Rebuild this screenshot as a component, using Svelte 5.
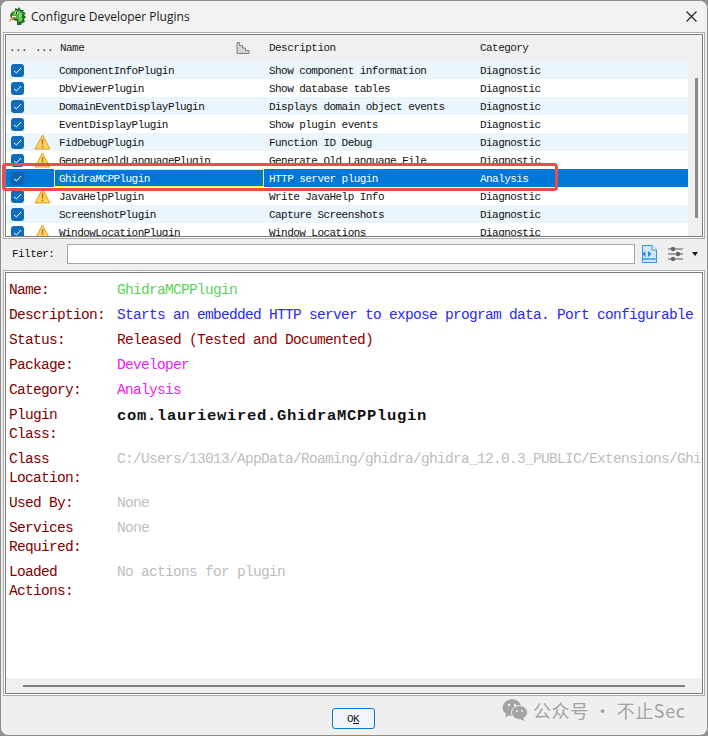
<script>
  const plugins = [
    { name: "ComponentInfoPlugin", desc: "Show component information", cat: "Diagnostic" },
    { name: "DbViewerPlugin", desc: "Show database tables", cat: "Diagnostic" },
    { name: "DomainEventDisplayPlugin", desc: "Displays domain object events", cat: "Diagnostic" },
    { name: "EventDisplayPlugin", desc: "Show plugin events", cat: "Diagnostic" },
    { name: "FidDebugPlugin", desc: "Function ID Debug", cat: "Diagnostic", warn: true },
    { name: "GenerateOldLanguagePlugin", desc: "Generate Old Language File", cat: "Diagnostic", warn: true },
    { name: "GhidraMCPPlugin", desc: "HTTP server plugin", cat: "Analysis", selected: true },
    { name: "JavaHelpPlugin", desc: "Write JavaHelp Info", cat: "Diagnostic", warn: true },
    { name: "ScreenshotPlugin", desc: "Capture Screenshots", cat: "Diagnostic" },
    { name: "WindowLocationPlugin", desc: "Window Locations", cat: "Diagnostic", warn: true },
  ];

  const details = [
    { label: ["Name:"], value: "GhidraMCPPlugin", kind: "green" },
    { label: ["Description:"], value: "Starts an embedded HTTP server to expose program data. Port configurable through Tool Options.", kind: "blue" },
    { label: ["Status:"], value: "Released (Tested and Documented)", kind: "red" },
    { label: ["Package:"], value: "Developer", kind: "pink" },
    { label: ["Category:"], value: "Analysis", kind: "pink" },
    { label: ["Plugin", "Class:"], value: "com.lauriewired.GhidraMCPPlugin", kind: "cls" },
    { label: ["Class", "Location:"], value: "C:/Users/13013/AppData/Roaming/ghidra/ghidra_12.0.3_PUBLIC/Extensions/GhidraMCP/lib/GhidraMCP.jar", kind: "gray" },
    { label: ["Used By:"], value: "None", kind: "gray" },
    { label: ["Services", "Required:"], value: "None", kind: "gray" },
    { label: ["Loaded", "Actions:"], value: "No actions for plugin", kind: "gray" },
  ];
</script>

<div class="window">
  <div class="titlebar">
    <svg class="dragon" width="18" height="19" viewBox="0 0 18 19">
      <path d="M6 1 L9 2 L10 0 L12 3 L15 3 L14 5 L17 6 L15 8 L17 10 L15 12 L16 15 L13 16 L12 18 L8 18 L8 14 L4 13 L2 11 L1 8 L3 5 L6 4 Z" fill="#1e6b1e" />
      <path d="M6 3 L11 4 L14 6 L13 9 L14 12 L12 15 L9 15 L9 12 L5 11 L3 9 L4 6 Z" fill="#4cb648" />
      <path d="M10 5 L13 7 L12 10 L13 13 L11 14 L10 10 Z" fill="#86d070" />
      <rect x="6" y="5" width="3" height="2" fill="#f4e04a" />
      <rect x="7" y="5" width="1" height="2" fill="#111" />
      <path d="M3 10 L6 11 L5 12 L3 12 L1 15 L0 14 L1 12 Z" fill="#f0883a" />
      <rect x="3" y="9" width="4" height="1" fill="#fff" />
    </svg>
    <span class="title">Configure Developer Plugins</span>
    <svg class="close" width="11" height="11" viewBox="0 0 11 11">
      <path d="M0.5 0.5 L10.5 10.5 M10.5 0.5 L0.5 10.5" stroke="#222" stroke-width="1.1" fill="none" />
    </svg>
  </div>

  <div class="panel table-panel">
    <div class="panel-inner table-inner">
      <div class="header">
        <span class="h-dots">...</span>
        <span class="h-dots">...</span>
        <span class="col-name h-name">
          Name
          <svg width="14" height="12" viewBox="0 0 14 12">
            <path d="M1 0.5 H3.5 V3.5 H6.5 V6 H9.5 V8.5 H13 V11.5 H1 Z" fill="#d4d4d4" stroke="#808080" />
          </svg>
        </span>
        <span class="col-desc">Description</span>
        <span class="col-cat">Category</span>
      </div>
      <div class="body">
        <div class="rows">
          {#each plugins as p, i}
            <div class="row" class:alt={i % 2 === 0} class:selected={p.selected}>
              <span class="check">
                <svg width="9" height="7" viewBox="0 0 9 7">
                  <path d="M1 3.8 L3.4 6 L8 1" stroke="#fff" stroke-width="1" fill="none" />
                </svg>
              </span>
              <span class="warn-cell">
                {#if p.warn}
                  <svg width="17" height="16" viewBox="0 0 17 16">
                    <path d="M8.5 1 L16 15 H1 Z" fill="#fbd75b" stroke="#e09a2a" stroke-linejoin="round" />
                    <path d="M8.5 5 V10.5 M8.5 11.8 V13.5" stroke="#c9781a" stroke-width="1.6" fill="none" />
                  </svg>
                {/if}
              </span>
              <span class="col-name" class:focus={p.selected}>{p.name}</span>
              <span class="col-desc">{p.desc}</span>
              <span class="col-cat">{p.cat}</span>
            </div>
          {/each}
        </div>
        <div class="vscroll"><div class="vthumb"></div></div>
      </div>
    </div>
  </div>

  <div class="filter">
    <span class="filter-label">Filter:</span>
    <div class="filter-input"></div>
    <svg width="16" height="18" viewBox="0 0 16 18">
      <path d="M1.5 0.5 H11 L15.5 5 V17.5 H1.5 Z" fill="#cfe6fa" stroke="#3d93dc" />
      <path d="M11 0.5 V5 H15.5" fill="#fff" stroke="#3d93dc" />
      <rect x="2" y="13" width="13" height="2" fill="#5aaeea" />
      <path d="M4.5 6 L1 9 L4.5 12 Z M7 6 L10.5 9 L7 12 Z" fill="#2f86d8" />
    </svg>
    <svg class="sliders" width="15" height="14" viewBox="0 0 15 14">
      <path d="M0 2 H15 M0 7 H15 M0 12 H15" stroke="#8a8a8a" stroke-width="1.4" />
      <circle cx="5" cy="2" r="2.2" fill="#666" />
      <circle cx="10" cy="7" r="2.2" fill="#666" />
      <circle cx="5" cy="12" r="2.2" fill="#666" />
    </svg>
    <span class="caret"></span>
  </div>

  <div class="panel details-panel">
    <div class="panel-inner details-inner">
      <div class="details">
        {#each details as d}
          <div class="label">
            {#each d.label as line}<div>{line}</div>{/each}
          </div>
          <div class="value {d.kind}">{d.value}</div>
        {/each}
      </div>
      <div class="hscroll"><div class="hthumb"></div></div>
    </div>
  </div>

  <div class="footer">
    <button type="button" class="ok">O<u>K</u></button>
  </div>

  <div class="mark"></div>
  <div class="watermark">
    <svg width="26" height="22" viewBox="0 0 26 22">
      <ellipse cx="10" cy="8.5" rx="9.5" ry="8.2" fill="#a3a3a3" />
      <path d="M4 14 L3.5 18.5 L8.5 15.5 Z" fill="#a3a3a3" />
      <ellipse cx="17.5" cy="13.5" rx="8" ry="7" fill="#a3a3a3" stroke="#efefef" />
      <path d="M21 18.5 L22.5 22 L17.5 20 Z" fill="#a3a3a3" />
      <circle cx="7" cy="6" r="1.2" fill="#efefef" />
      <circle cx="13" cy="6" r="1.2" fill="#efefef" />
      <circle cx="15" cy="12" r="1" fill="#efefef" />
      <circle cx="20" cy="12" r="1" fill="#efefef" />
    </svg>
    <span>公众号 · 不止Sec</span>
  </div>
</div>

<style>
  :global(body) {
    background: #8f8f8f;
    overflow: hidden;
  }
  .window {
    position: relative;
    width: 708px;
    height: 736px;
    box-sizing: border-box;
    display: flex;
    flex-direction: column;
    background: #efefef;
    border: 1px solid #8c8c8c;
    border-radius: 8px;
    overflow: hidden;
    font-family: "Liberation Mono", monospace;
    color: #111;
  }
  .titlebar {
    height: 31px;
    flex: none;
    display: flex;
    align-items: center;
    background: #f2f2f2;
    padding: 0 10px 0 8px;
  }
  .dragon {
    margin-right: 4px;
  }
  .title {
    flex: 1;
    font: 12px "Open Sans", sans-serif;
    color: #1a1a1a;
  }
  .panel {
    flex: none;
    margin: 0 2px;
    border: 1px solid #ababab;
    padding: 1px;
    background: #fff;
  }
  .panel-inner {
    border: 1px solid #7c7c7c;
    height: 100%;
    box-sizing: border-box;
    overflow: hidden;
  }
  .table-panel {
    height: 207px;
    box-sizing: border-box;
  }
  .table-inner {
    background: #f0f0f0;
    display: flex;
    flex-direction: column;
  }
  .header,
  .row {
    display: flex;
    align-items: stretch;
    font-size: 11px;
    letter-spacing: -0.55px;
    line-height: 20px;
  }
  .header {
    height: 26px;
    flex: none;
    color: #222;
    line-height: 26px;
  }
  .h-dots {
    width: 24px;
    padding-left: 3px;
    box-sizing: border-box;
  }
  .h-dots + .h-dots {
    padding-left: 5px;
  }
  .col-name {
    width: 210px;
    box-sizing: border-box;
    padding-left: 5px;
  }
  .h-name {
    display: flex;
    align-items: center;
    justify-content: space-between;
    padding-left: 6px;
    padding-right: 14px;
  }
  .col-desc {
    width: 211px;
    padding-left: 5px;
    box-sizing: border-box;
  }
  .col-cat {
    flex: 1;
    padding-left: 5px;
  }
  .body {
    flex: 1;
    display: flex;
    overflow: hidden;
    background: #f0f0f0;
  }
  .rows {
    width: 682px;
    flex: none;
    background: #fff;
  }
  .row {
    height: 18px;
    background: #fff;
  }
  .row.alt {
    background: #ebf5fc;
  }
  .row.selected {
    background: #0078d7;
    color: #fff;
  }
  .check {
    width: 13px;
    height: 13px;
    margin-left: 5px;
    align-self: center;
    border-radius: 3px;
    background: #0f6cbd;
    display: flex;
    align-items: center;
    justify-content: center;
    flex: none;
  }
  .selected .check {
    background: #0d62b4;
  }
  .warn-cell {
    width: 30px;
    flex: none;
    padding-left: 10px;
    box-sizing: border-box;
    display: flex;
    align-items: center;
  }
  .focus {
    border: 1px solid #f5f050;
    padding-left: 4px;
    line-height: 18px;
  }
  .vscroll {
    flex: 1;
    position: relative;
  }
  .vthumb {
    width: 3px;
    height: 140px;
    margin: 17px 0 0 7px;
    background: #8a8a8a;
  }
  .filter {
    height: 31px;
    flex: none;
    display: flex;
    align-items: center;
    padding: 0 8px 2px 11px;
    background: #efefef;
    box-sizing: border-box;
  }
  .filter-label {
    width: 55px;
    font-size: 11px;
    letter-spacing: -0.55px;
  }
  .filter-input {
    width: 568px;
    height: 20px;
    box-sizing: border-box;
    background: #fff;
    border: 1px solid #a6a6a6;
    margin-right: 6px;
  }
  .sliders {
    margin-left: 11px;
  }
  .caret {
    margin-left: 9px;
    border-left: 3px solid transparent;
    border-right: 3px solid transparent;
    border-top: 4px solid #111;
  }
  .details-panel {
    height: 426px;
    box-sizing: border-box;
  }
  .details-inner {
    display: flex;
    flex-direction: column;
    background: #fff;
  }
  .details {
    flex: 1;
    min-height: 0;
    display: grid;
    grid-template-columns: 108px minmax(0, 1fr);
    row-gap: 6px;
    align-content: start;
    padding: 8px 0 0 3px;
    font-size: 14.5px;
    letter-spacing: -0.7px;
    line-height: 19px;
    overflow: hidden;
  }
  .label {
    color: #800000;
  }
  .value {
    white-space: nowrap;
    overflow: hidden;
  }
  .green { color: #5ad25a; }
  .blue { color: #2a2af0; }
  .red { color: #900000; }
  .pink { color: #f020f0; }
  .gray { color: #bdbdbd; }
  .cls {
    color: #111;
    font-weight: bold;
    font-size: 15.5px;
    letter-spacing: 0.7px;
    padding-top: 1px;
  }
  .hscroll {
    height: 15px;
    flex: none;
    background: #f0f0f0;
    display: flex;
    align-items: center;
    padding-left: 17px;
  }
  .hthumb {
    width: 662px;
    height: 2px;
    background: #808080;
  }
  .footer {
    flex: 1;
    display: flex;
    justify-content: center;
    align-items: flex-start;
    padding: 12px 2px 0 0;
  }
  .ok {
    width: 43px;
    height: 21px;
    padding: 0;
    border: 1px solid #0078d4;
    border-radius: 3px;
    background: #f0f6fc;
    font-family: "Liberation Mono", monospace;
    font-size: 11px;
    letter-spacing: -0.55px;
    color: #111;
  }
  .mark {
    position: absolute;
    left: 1px;
    top: 162px;
    width: 556px;
    height: 28px;
    box-sizing: border-box;
    border: 3px solid #f14a4a;
    border-radius: 4px;
  }
  .watermark {
    position: absolute;
    left: 501px;
    top: 696px;
    display: flex;
    align-items: center;
    gap: 5px;
    font-family: "Noto Sans CJK SC", sans-serif;
    font-size: 18px;
    color: #a3a3a3;
    letter-spacing: 0.6px;
  }
</style>
